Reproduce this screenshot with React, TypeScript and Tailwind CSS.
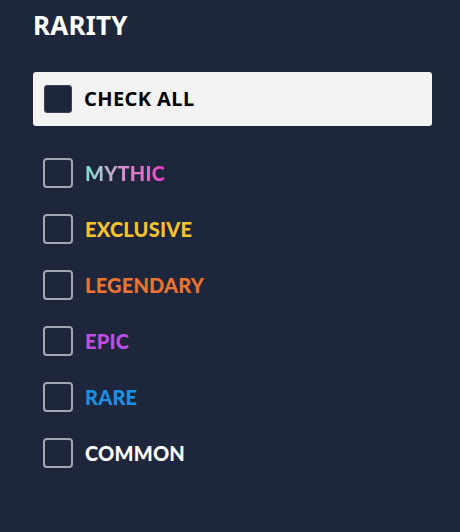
import React from "react";

const items: { label: string; cls: string }[] = [
  { label: "MYTHIC", cls: "bg-gradient-to-r from-[#6ee6cf] via-[#d98ad0] to-[#e83dc4] bg-clip-text text-transparent" },
  { label: "EXCLUSIVE", cls: "text-[#f6c42a]" },
  { label: "LEGENDARY", cls: "text-[#ef7330]" },
  { label: "EPIC", cls: "text-[#bd4fe6]" },
  { label: "RARE", cls: "text-[#1b90e6]" },
  { label: "COMMON", cls: "text-white" },
];

export default function App() {
  return (
    <div className="w-[460px] h-[532px] bg-[#1e263c] pl-[33px] pr-[28px] pt-[6px]">
      <h2 className="text-[26px] leading-[38px] font-bold text-white tracking-[0.2px]" style={{ fontFamily: '"Noto Sans", sans-serif' }}>
        RARITY
      </h2>
      <div className="mt-[28px] h-[54px] bg-[#f3f3f3] rounded-[3px] flex items-center pl-[11px] gap-[12px]">
        <div className="w-[28px] h-[28px] bg-[#1e263c] rounded-[3px] border border-[#3a4256]" />
        <span className="text-[20px] font-bold text-black tracking-[0.4px]" style={{ fontFamily: '"Noto Sans", sans-serif' }}>
          CHECK ALL
        </span>
      </div>
      <div className="mt-[32px] flex flex-col gap-[26px] pl-[10px]">
        {items.map((it) => (
          <div key={it.label} className="flex items-center gap-[12px] h-[30px]">
            <div className="w-[30px] h-[30px] rounded-[4px] border-2 border-[#a3a7b0]" />
            <span className={`text-[20px] font-black tracking-[0.2px] ${it.cls}`} style={{ fontFamily: 'Lato, sans-serif' }}>
              {it.label}
            </span>
          </div>
        ))}
      </div>
    </div>
  );
}
